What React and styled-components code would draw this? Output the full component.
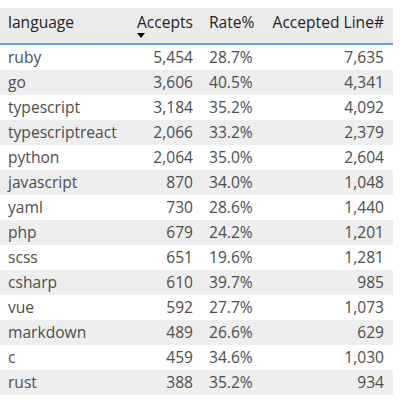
import React from "react";
import styled, { createGlobalStyle } from "styled-components";

const Global = createGlobalStyle`
  html, body { margin: 0; padding: 0; background: #fff; }
  body { font-family: "Open Sans", "Noto Sans", sans-serif; }
`;

const Page = styled.div`
  padding-top: 8px;
  width: 400px;
`;

const Table = styled.div`
  width: 393px;
  display: grid;
  grid-template-columns: 122px 79px 62px 130px;
  font-size: 15.6px;
`;

const HeadCell = styled.div`
  background: #ebebeb;
  border-bottom: 2px solid #5aa5ee;
  color: #252423;
  line-height: 20px;
  padding: 4px ${(p) => (p.$last ? "9px" : "8px")} 0 8px;
  display: flex;
  flex-direction: column;
  align-items: ${(p) => (p.$right ? "flex-end" : "flex-start")};
  box-sizing: border-box;
  height: 37px;
  white-space: nowrap;
`;

const SortWrap = styled.div`
  display: flex;
  flex-direction: column;
  align-items: flex-start;
`;

const SortArrow = styled.div`
  width: 0;
  height: 0;
  margin-top: 1px;
  margin-left: 0px;
  border-left: 4px solid transparent;
  border-right: 4px solid transparent;
  border-top: 5px solid #000;
`;

const Cell = styled.div`
  height: 25px;
  line-height: 25px;
  padding: 0 ${(p) => (p.$last ? "9px" : "8px")} 0 8px;
  background: ${(p) => (p.$odd ? "#eeeeee" : "#ffffff")};
  color: #4d4d4d;
  text-align: ${(p) => (p.$right ? "right" : "left")};
  white-space: nowrap;
  overflow: hidden;
`;

const rows = [
  ["ruby", "5,454", "28.7%", "7,635"],
  ["go", "3,606", "40.5%", "4,341"],
  ["typescript", "3,184", "35.2%", "4,092"],
  ["typescriptreact", "2,066", "33.2%", "2,379"],
  ["python", "2,064", "35.0%", "2,604"],
  ["javascript", "870", "34.0%", "1,048"],
  ["yaml", "730", "28.6%", "1,440"],
  ["php", "679", "24.2%", "1,201"],
  ["scss", "651", "19.6%", "1,281"],
  ["csharp", "610", "39.7%", "985"],
  ["vue", "592", "27.7%", "1,073"],
  ["markdown", "489", "26.6%", "629"],
  ["c", "459", "34.6%", "1,030"],
  ["rust", "388", "35.2%", "934"],
];

export default function App() {
  return (
    <Page>
      <Global />
      <Table>
        <HeadCell>language</HeadCell>
        <HeadCell $right>
          <SortWrap>
            <span>Accepts</span>
            <SortArrow />
          </SortWrap>
        </HeadCell>
        <HeadCell>Rate%</HeadCell>
        <HeadCell $right $last>Accepted Line#</HeadCell>
        {rows.map((r, i) => (
          <React.Fragment key={r[0]}>
            <Cell $odd={i % 2 === 1}>{r[0]}</Cell>
            <Cell $odd={i % 2 === 1} $right>{r[1]}</Cell>
            <Cell $odd={i % 2 === 1}>{r[2]}</Cell>
            <Cell $odd={i % 2 === 1} $right $last>{r[3]}</Cell>
          </React.Fragment>
        ))}
      </Table>
    </Page>
  );
}
